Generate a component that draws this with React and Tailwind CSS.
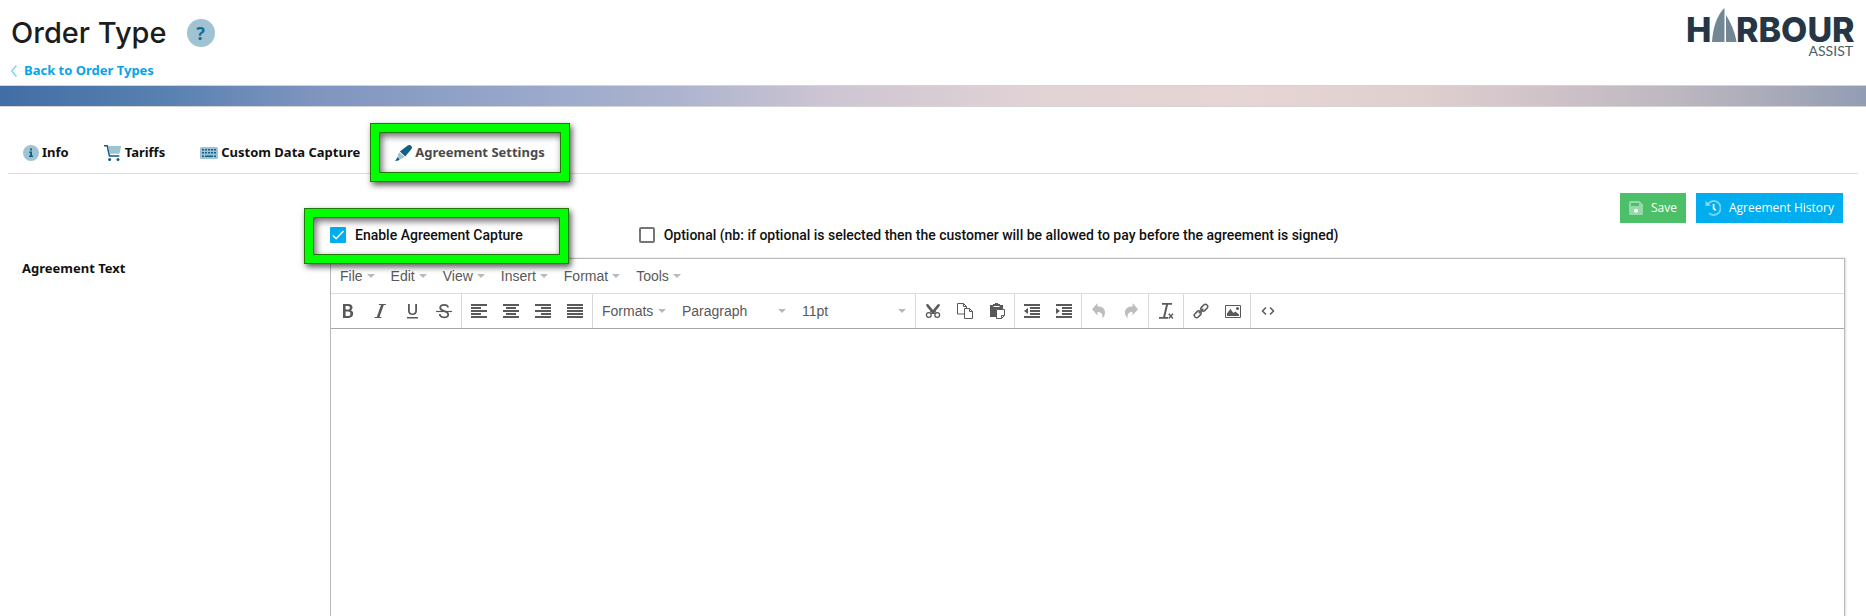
import React from "react";

const DARK = "#0f5f86";
const PALE = "#9fc3d2";

function InfoIcon() {
  return (
    <svg className="size-4 shrink-0" viewBox="0 0 16 16" aria-hidden="true">
      <circle cx="8" cy="8" r="8" fill={PALE} />
      <path d="M7.1 3.6h1.9v1.8H7.1zM6.2 6.5h2.8v4h1v1.4H6.1v-1.4h1.1V7.9h-1z" fill={DARK} />
    </svg>
  );
}

function CartIcon() {
  return (
    <svg className="h-4 w-[18px] shrink-0" viewBox="0 0 18 16" aria-hidden="true">
      <path d="M4.200 1H17.300l-1.900 7.800H5.700z" fill={PALE} />
      <path d="M0 0h3.800L6 10.200h9.300v1.500H4.800L2.600 1.500H0z" fill={DARK} />
      <circle cx="5.600" cy="14.400" r="1.500" fill={DARK} />
      <circle cx="14" cy="14.400" r="1.500" fill={DARK} />
    </svg>
  );
}

function KeyboardIcon() {
  const cols = [2, 5, 8, 11, 14];
  return (
    <svg className="h-3 w-[18px] shrink-0" viewBox="0 0 18 12" aria-hidden="true">
      <rect width="18" height="12" rx="1.500" fill={PALE} />
      {cols.map((x) => (
        <g key={x} fill={DARK}>
          <rect x={x} y="2" width="2" height="1.500" />
          <rect x={x} y="5" width="2" height="1.500" />
        </g>
      ))}
      <path d="M2 8.500h2V10H2zM5 8.500h8V10H5zM14 8.500h2V10h-2z" fill={DARK} />
    </svg>
  );
}

function MarkerIcon() {
  return (
    <svg className="h-4 w-[17px] shrink-0" viewBox="0 0 17 16" aria-hidden="true">
      <path d="M4.300 7.200 9.600 12 6.300 13.900 3.800 14.300 2.600 12.600 2.800 9.900z" fill={PALE} />
      <path d="M2.600 12.200 4.600 14.200 3.600 15.600 0 16z" fill={DARK} />
      <path d="M4.900 6.600 12.700.6c1.200-.9 2.800-.7 3.600.3.900 1 .9 2.300 0 3.400L10.200 11.500z" fill={DARK} />
    </svg>
  );
}

function SaveIcon() {
  return (
    <svg className="size-3.5 shrink-0" viewBox="0 0 14 14" aria-hidden="true">
      <path d="M1.500 0h9L14 3.500v9c0 .8-.7 1.500-1.500 1.500h-11C.7 14 0 13.300 0 12.500v-11C0 .7.700 0 1.500 0zM2 2v3h8V2z" fill="#fff" fillOpacity=".42" fillRule="evenodd" />
      <circle cx="7" cy="9.800" r="2" fill="#fff" />
    </svg>
  );
}

function HistoryIcon() {
  return (
    <svg className="size-4 shrink-0" viewBox="0 0 16 16" aria-hidden="true">
      <path d="M2.600 4.400A7 7 0 1 1 4 13.300" fill="none" stroke="#fff" strokeOpacity=".45" strokeWidth="2" />
      <path d="M.3.500V6h5.600z" fill="#fff" fillOpacity=".45" />
      <path d="M8.600 4v4.300l2 2" fill="none" stroke="#fff" strokeWidth="1.700" />
    </svg>
  );
}

function Logo() {
  return (
    <svg className="h-[52px] w-[170px]" viewBox="-3 0 170 52" role="img" aria-label="Harbour Assist">
      <g fill="#253746" fontFamily="Inter, sans-serif" fontWeight="800">
        <text x="-2" y="34" fontSize="34">H</text>
        <text x="48" y="34" fontSize="34">RBOUR</text>
      </g>
      <path d="M24 34C25 19 29 7 36.500 0V34z" fill="#728694" />
      <path d="M38 7C43 15 47 24 48.500 34H38z" fill="#728694" />
      <text x="165" y="48" textAnchor="end" fontSize="14" fill="#4d5d69" fontFamily="Lato, sans-serif">ASSIST</text>
    </svg>
  );
}

function Lines({ rows }) {
  return (
    <g>
      {rows.map(([x, w], i) => (
        <rect key={i} x={x} y={1 + i * 3} width={w} height="2" />
      ))}
    </g>
  );
}

const ICONS = {
  Bold: <path fillRule="evenodd" d="M3 1h5.500c2.500 0 4 1.300 4 3.400 0 1.400-.7 2.400-1.900 2.900 1.600.4 2.600 1.600 2.600 3.300 0 2.500-1.800 4.400-4.500 4.400H3zM5.600 3v3.600h2.200c1.300 0 2.100-.7 2.100-1.800S9.200 3 8 3zM5.600 8.500V13h2.600c1.400 0 2.200-.9 2.200-2.300 0-1.300-.8-2.200-2.200-2.200z" />,
  Italic: <path d="M7 1h7l-.2 1h-2L7.500 14h2l-.2 1H2.500l.3-1h2L9 2H6.800z" />,
  Underline: <path d="M3 14h11v1.500H3zM4 1h1.800v6.500c0 2 1 3 2.700 3s2.700-1 2.700-3V1H13v6.700c0 2.700-1.700 4.300-4.500 4.300S4 10.400 4 7.700z" />,
  Strikethrough: (
    <g fill="none" stroke="currentColor">
      <path d="M0 8.500h16" strokeWidth="1.200" />
      <path d="M12 4.600C12 2.900 10.400 1.800 8.200 1.800S4.200 3 4.200 4.800c0 4.200 8 2.600 8 6.600 0 1.700-1.700 2.900-4.200 2.900s-4.200-1.200-4.200-3.200" strokeWidth="1.800" />
    </g>
  ),
  "Align left": <Lines rows={[[0, 16], [0, 10], [0, 16], [0, 10], [0, 16]]} />,
  "Align center": <Lines rows={[[0, 16], [3, 10], [0, 16], [3, 10], [0, 16]]} />,
  "Align right": <Lines rows={[[0, 16], [6, 10], [0, 16], [6, 10], [0, 16]]} />,
  Justify: <Lines rows={[[0, 16], [0, 16], [0, 16], [0, 16], [0, 16]]} />,
  Cut: (
    <g>
      <path d="M1 1.500 3 1l5 6 5-6 2 .5c0 1.700-2.500 4.200-4.500 6.500L12 9.500H4L5.500 8C3.500 5.700 1 3.200 1 1.500z" />
      <g fill="none" stroke="currentColor" strokeWidth="1.300">
        <circle cx="3.800" cy="12" r="2.400" />
        <circle cx="12.200" cy="12" r="2.400" />
      </g>
      <path d="M7 8h2l1 3H6z" />
    </g>
  ),
  Copy: (
    <g fill="#fff" stroke="currentColor">
      <path d="M.5.500h6l3 3V11h-9zM6.500.500v3h3" />
      <path d="M7.500 5.500h5l3 3v7h-8zM12.500 5.500v3h3" />
    </g>
  ),
  Paste: (
    <g>
      <path d="M1 2h3V1h2V0h3v1h2v1h3v4h-2V4H3v2H1zM1 3h11v3H7v8H1z" />
      <path d="M4.500 3.500h6" stroke="#fff" />
      <path d="M7.500 6.500h8v6l-3 3h-5zM15.500 12.500h-3v3" fill="#fff" stroke="currentColor" />
    </g>
  ),
  "Decrease indent": (
    <g>
      <Lines rows={[[0, 16], [6, 10], [6, 10], [6, 10], [0, 16]]} />
      <path d="M4 5v6L0 8z" />
    </g>
  ),
  "Increase indent": (
    <g>
      <Lines rows={[[0, 16], [6, 10], [6, 10], [6, 10], [0, 16]]} />
      <path d="M0 5v6l4-3z" />
    </g>
  ),
  Undo: <path d="M6.500 0v3.600c4.500 0 7.500 2 7.500 5.800 0 2.300-1 4.300-2.800 5.800.9-4.100-.7-6.200-4.700-6.200v3.500L1 6.300z" />,
  Redo: <path d="M9.500 0v3.600C5 3.600 2 5.600 2 9.400c0 2.300 1 4.300 2.800 5.800C3.900 11.100 5.500 9 9.500 9v3.500L15 6.300z" />,
  "Clear formatting": (
    <g>
      <path d="M4 0h10v1.700H4zM1 14h9v1.700H1zM8.200 1h2L7 14.500H5z" />
      <path d="m10.700 10.800 4.300 4.600m0-4.600-4.300 4.600" stroke="currentColor" strokeWidth="1.400" />
    </g>
  ),
  "Insert link": (
    <g fill="none" stroke="currentColor" strokeWidth="1.500">
      <rect x="-3.800" y="-2.300" width="7.600" height="4.600" rx="2.300" transform="translate(4.700 11.300) rotate(-45)" />
      <rect x="-3.800" y="-2.300" width="7.600" height="4.600" rx="2.300" transform="translate(11.300 4.700) rotate(-45)" />
      <path d="m5.800 10.200 4.400-4.400" />
    </g>
  ),
  "Insert image": (
    <g>
      <path d="M.5 2.500h15v12H.5z" fill="none" stroke="currentColor" />
      <path d="M2 13V10.500L5.300 6 8.500 10l1.800-1.500L14 11.500V13z" />
      <circle cx="12.500" cy="5.500" r="1.500" />
    </g>
  ),
  "Source code": <path d="M6 4.500 2.500 8 6 11.500m4-7L13.500 8 10 11.500" fill="none" stroke="currentColor" strokeWidth="1.500" />,
};

const DISABLED = ["Undo", "Redo"];

function Tool({ name }) {
  const off = DISABLED.includes(name);
  return (
    <button
      type="button"
      aria-label={name}
      disabled={off}
      className={off ? "flex h-8 w-8 items-center justify-center text-[#bdbdbd]" : "flex h-8 w-8 items-center justify-center text-[#595959]"}
    >
      <svg className="size-4" viewBox="0 0 16 16" fill="currentColor" aria-hidden="true">
        {ICONS[name]}
      </svg>
    </button>
  );
}

function Caret() {
  return (
    <svg className="h-1 w-2 shrink-0" viewBox="0 0 8 4" aria-hidden="true">
      <path d="M0 0h8L4 4z" fill="#b5bcc2" />
    </svg>
  );
}

function Group({ names, first }) {
  return (
    <div className={first ? "flex items-center px-px" : "flex items-center border-l border-[#d9d9d9] px-px"}>
      {names.map((n) => (
        <Tool key={n} name={n} />
      ))}
    </div>
  );
}

function Highlight({ className }) {
  return (
    <span
      aria-hidden="true"
      className={
        "pointer-events-none absolute z-10 border-8 border-[#00ff00] shadow-[0_0_0_1px_#23780a,2px_3px_6px_1px_rgba(0,0,0,0.65),inset_0_0_0_1px_#23780a,inset_2px_3px_7px_1px_rgba(0,0,0,0.6)] " +
        className
      }
    />
  );
}

function Tab({ icon, label, active, children }) {
  return (
    <a
      href="#"
      aria-current={active ? "page" : undefined}
      className={active ? "relative flex items-center gap-[3px] text-[#4a4a4a]" : "relative flex items-center gap-[3px] text-[#111]"}
    >
      {icon}
      {label}
      {children}
    </a>
  );
}

const TOOL_GROUPS_AFTER = [
  ["Cut", "Copy", "Paste"],
  ["Decrease indent", "Increase indent"],
  ["Undo", "Redo"],
  ["Clear formatting"],
  ["Insert link", "Insert image"],
  ["Source code"],
];

export default function App() {
  return (
    <div className="flex min-h-screen flex-col bg-white font-['Noto_Sans',sans-serif] text-[13px] text-[#111]">
      <header className="flex items-start justify-between pr-[11px]">
        <div className="pl-[11px]">
          <div className="flex items-center gap-5 pt-[13px]">
            <h1 className="font-['Inter',sans-serif] text-[29px] leading-10 font-medium text-[#1d1d1d]">Order Type</h1>
            <button type="button" aria-label="Help" className="flex size-7 items-center justify-center rounded-full bg-[#9fc3d2] text-lg font-bold text-[#0f6f9c]">
              ?
            </button>
          </div>
          <a href="#" className="mt-2 mb-1 flex h-5 items-center gap-[7px] font-bold text-[#06a5e8]">
            <svg className="h-3 w-1.5" viewBox="0 0 6 12" aria-hidden="true">
              <path d="M5.500.500.700 6l4.800 5.500" fill="none" stroke="#7fd3f5" strokeWidth="1.500" />
            </svg>
            Back to Order Types
          </a>
        </div>
        <div className="pt-2">
          <Logo />
        </div>
      </header>

      <div className="h-[22px] border-y border-[#d5d5d5] bg-[linear-gradient(90deg,#416ea5_0%,#5981b1_9%,#7f95bf_17%,#9aa9cb_29%,#acb3cf_36%,#cfc6d3_45%,#e2d3d5_56%,#e6d5d3_67%,#dfcfcf_76%,#cfc2c8_83%,#bcb7c0_90%,#a9aab9_95%,#929db4_100%)]" />

      <main className="flex flex-1 flex-col px-2">
        <nav className="mt-[25px] flex h-[42px] items-center gap-[35px] border-b border-[#dcdcdc] pl-[15px] font-bold">
          <Tab icon={<InfoIcon />} label="Info" />
          <Tab icon={<CartIcon />} label="Tariffs" />
          <Tab icon={<KeyboardIcon />} label="Custom Data Capture" />
          <Tab icon={<MarkerIcon />} label="Agreement Settings" active>
            <Highlight className="-inset-x-6 -inset-y-[19px]" />
          </Tab>
        </nav>

        <div className="mt-[19px] flex justify-end gap-2.5 pr-[15px] font-['Open_Sans',sans-serif] text-xs text-white">
          <button type="button" className="flex h-[30px] items-center gap-2 bg-[#4bc068] px-[9px]">
            <SaveIcon />
            Save
          </button>
          <button type="button" className="flex h-[30px] items-center gap-2 bg-[#00adef] px-[9px]">
            <HistoryIcon />
            Agreement History
          </button>
        </div>

        <div className="flex flex-1 pr-[13px]">
          <label htmlFor="agreement" className="w-[322px] shrink-0 pt-9 pl-3.5 font-bold">
            Agreement Text
          </label>
          <div className="flex min-w-0 flex-1 flex-col">
            <div className="flex h-[35px] items-start gap-[116px] pt-0.5 font-['Roboto',sans-serif] text-sm font-medium">
              <label className="relative flex items-center gap-[9px]">
                <input type="checkbox" defaultChecked className="peer size-4 appearance-none rounded-[1px] bg-[#00adef]" />
                <svg className="pointer-events-none absolute left-0 size-4" viewBox="0 0 16 16" aria-hidden="true">
                  <path d="m3 8.500 3.200 3.200L13.500 4" fill="none" stroke="#fff" strokeWidth="1.500" />
                </svg>
                Enable Agreement Capture
                <Highlight className="-top-4 -right-[45px] -bottom-[18px] -left-[25px]" />
              </label>
              <label className="flex items-center gap-[9px]">
                <input type="checkbox" className="size-4 appearance-none rounded-[2px] border-2 border-[#757575] bg-white" />
                Optional (nb: if optional is selected then the customer will be allowed to pay before the agreement is signed)
              </label>
            </div>

            <div className="flex flex-1 flex-col border border-b-0 border-[#b9b9b9] font-['Liberation_Sans',sans-serif] text-sm text-[#595959] shadow-[1px_0_2px_rgba(0,0,0,0.15)]">
              <div className="flex h-[35px] items-center border-b border-[#dedede] pl-px">
                {["File", "Edit", "View", "Insert", "Format", "Tools"].map((m) => (
                  <button key={m} type="button" className="flex items-center gap-1 px-2">
                    {m}
                    <Caret />
                  </button>
                ))}
              </div>
              <div className="flex h-[35px] border-b border-[#a6a6a6]">
                <Group first names={["Bold", "Italic", "Underline", "Strikethrough"]} />
                <Group names={["Align left", "Align center", "Align right", "Justify"]} />
                <div className="flex items-center border-l border-[#d9d9d9] px-px">
                  {[
                    ["Formats", "flex w-20 items-center justify-between px-2"],
                    ["Paragraph", "flex w-[120px] items-center justify-between px-2"],
                    ["11pt", "flex w-[120px] items-center justify-between px-2"],
                  ].map(([label, cls]) => (
                    <button key={label} type="button" className={cls}>
                      {label}
                      <Caret />
                    </button>
                  ))}
                </div>
                {TOOL_GROUPS_AFTER.map((g) => (
                  <Group key={g[0]} names={g} />
                ))}
              </div>
              <textarea id="agreement" className="w-full flex-1 resize-none p-2 outline-none" />
            </div>
          </div>
        </div>
      </main>
    </div>
  );
}
